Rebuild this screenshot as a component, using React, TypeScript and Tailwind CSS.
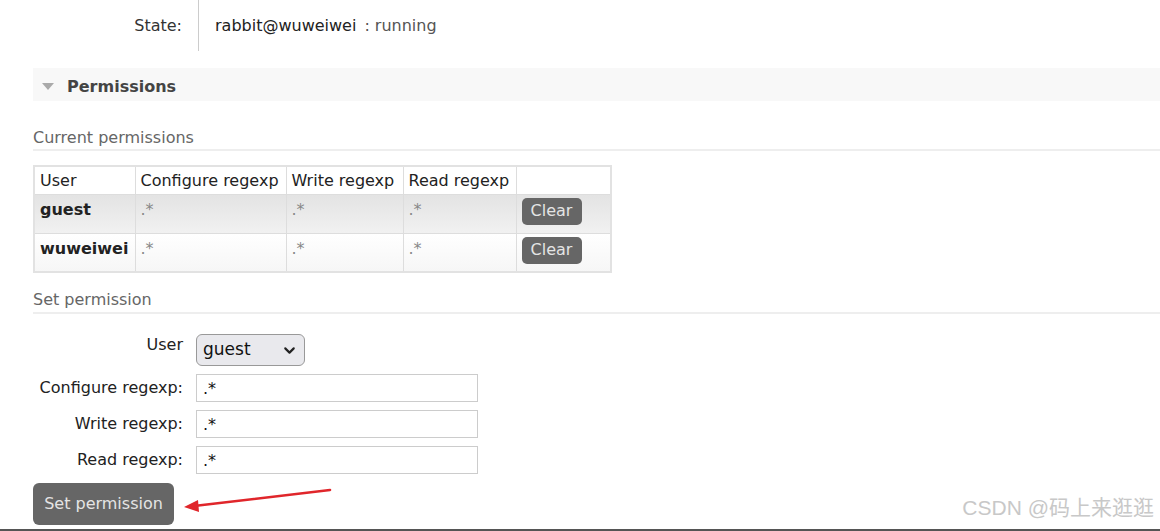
import { ChevronDown } from "lucide-react";

const rows = [
  { user: "guest", configure: ".*", write: ".*", read: ".*", shade: "bg-linear-to-b from-[#e3e3e3] to-[#f1f1f1]" },
  { user: "wuweiwei", configure: ".*", write: ".*", read: ".*", shade: "bg-linear-to-b from-white to-[#f6f6f6]" },
];

const fields = [
  { label: "Configure regexp:", value: ".*" },
  { label: "Write regexp:", value: ".*" },
  { label: "Read regexp:", value: ".*" },
];

export default function App() {
  return (
    <div className="relative h-[531px] w-[1160px] overflow-hidden border-b-2 border-[#555] bg-white font-['DejaVu_Sans',sans-serif] text-[16px] text-[#222]">
      {/* node state row */}
      <div className="flex h-[51px]">
        <div className="flex w-[198px] items-center justify-end pr-[16px] text-[#333]">State:</div>
        <div className="flex items-center border-l border-[#ccc] pl-[16px]">
          <span>rabbit@wuweiwei</span>
          <span className="ml-[8px] text-[#555]">: running</span>
        </div>
      </div>

      <div className="ml-[33px]">
        <div className="mt-[17px] flex h-[33px] items-center bg-[#f8f8f8] pt-[4px] pl-[9px]">
          <span className="h-0 w-0 border-x-[6px] border-t-[7px] border-x-transparent border-t-[#aaa]" />
          <span className="ml-[13px] font-bold text-[#444]">Permissions</span>
        </div>

        <h3 className="mt-[27px] border-b-2 border-[#eee] pb-[1px] text-[16px] leading-[20px] font-normal text-[#666]">
          Current permissions
        </h3>

        <table className="mt-[14px] border-collapse border-2 border-[#e2e2e2] text-left whitespace-nowrap">
          <thead>
            <tr className="h-[28px] bg-white">
              <th className="w-[101px] border border-[#ddd] px-[5px] pt-[2px] font-normal">User</th>
              <th className="w-[151px] border border-[#ddd] px-[5px] pt-[2px] font-normal">Configure regexp</th>
              <th className="w-[117px] border border-[#ddd] px-[5px] pt-[2px] font-normal">Write regexp</th>
              <th className="w-[113px] border border-[#ddd] px-[5px] pt-[2px] font-normal">Read regexp</th>
              <th className="w-[95px] border border-[#ddd]"></th>
            </tr>
          </thead>
          <tbody>
            {rows.map((r) => (
              <tr key={r.user} className={`h-[39px] ${r.shade}`}>
                <td className="border border-[#ddd] px-[5px] pt-[3px] align-top font-bold">{r.user}</td>
                <td className="border border-[#ddd] px-[5px] pt-[3px] align-top text-[#888]">{r.configure}</td>
                <td className="border border-[#ddd] px-[5px] pt-[3px] align-top text-[#888]">{r.write}</td>
                <td className="border border-[#ddd] px-[5px] pt-[3px] align-top text-[#888]">{r.read}</td>
                <td className="border border-[#ddd] px-[5px] pt-[3px] align-top">
                  <button className="h-[27px] w-[60px] rounded-[5px] bg-[#666] text-[16px] text-[#e4e4e4]">Clear</button>
                </td>
              </tr>
            ))}
          </tbody>
        </table>

        <h3 className="mt-[17px] border-b-2 border-[#eee] pb-[2px] text-[16px] leading-[20px] font-normal text-[#666]">
          Set permission
        </h3>

        <div className="mt-[20px] grid grid-cols-[150px_auto] items-start gap-x-[13px] gap-y-[8px]">
          <div className="pt-[1px] text-right leading-[20px]">User</div>
          <div className="relative w-[109px]">
            <select className="h-[32px] w-full appearance-none rounded-[6px] border border-[#999] bg-[#e9e9ed] pl-[6px] text-[17px] text-[#111]">
              <option>guest</option>
            </select>
            <ChevronDown className="pointer-events-none absolute top-[8px] right-[7px] h-[17px] w-[17px] text-[#222]" strokeWidth={3} />
          </div>
          {fields.map((f) => (
            <div key={f.label} className="contents">
              <div className="flex h-[28px] items-center justify-end">{f.label}</div>
              <input
                readOnly
                value={f.value}
                className="h-[28px] w-[282px] border border-[#ccc] px-[6px] text-[16px] text-[#111] outline-none"
              />
            </div>
          ))}
        </div>

        <button className="mt-[9px] h-[42px] w-[141px] rounded-[6px] bg-[#666] text-[16px] text-[#e4e4e4]">
          Set permission
        </button>
      </div>

      {/* red annotation arrow */}
      <svg className="absolute top-[480px] left-[180px]" width="160" height="40" viewBox="0 0 160 40">
        <line x1="150" y1="10" x2="14" y2="26" stroke="#e0262b" strokeWidth="2.6" strokeLinecap="round" />
        <polygon points="4,27 18,20 19,32" fill="#e0262b" />
      </svg>

      <div className="absolute right-[6px] bottom-[6px] font-['Liberation_Sans','Noto_Sans_CJK_SC',sans-serif] text-[21px] text-[#c8c8c8] [text-shadow:0_1px_1px_#fff]">
        CSDN @码上来逛逛
      </div>
    </div>
  );
}
